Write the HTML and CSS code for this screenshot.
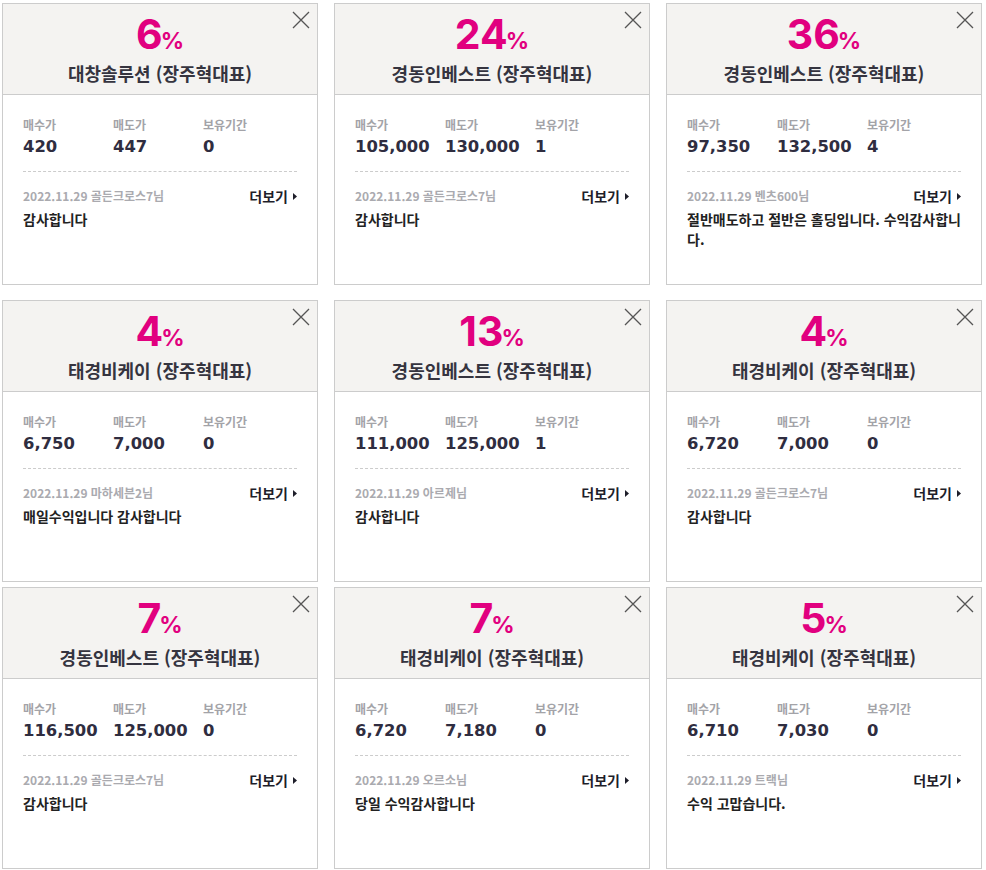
FILE: index.html
```html
<!DOCTYPE html>
<html lang="ko">
<head>
    <meta charset="UTF-8">
    <title>수익 후기</title>
    <link rel="stylesheet" href="styles.css">
</head>
<body>
    <div class="review-board">

        <!-- Row 1 -->
        <div class="review-row">
            <div class="review-card">
                <div class="card-head">
                    <button class="close-btn"><svg width="18" height="18" viewBox="0 0 18 18"><path d="M1 1L17 17M17 1L1 17"/></svg></button>
                    <div class="rate">6<span>%</span></div>
                    <div class="stock">대창솔루션 (장주혁대표)</div>
                </div>
                <div class="card-body">
                    <div class="trade">
                        <div class="trade-col"><span class="label">매수가</span><span class="value">420</span></div>
                        <div class="trade-col"><span class="label">매도가</span><span class="value">447</span></div>
                        <div class="trade-col"><span class="label">보유기간</span><span class="value">0</span></div>
                    </div>
                    <div class="meta">
                        <span class="writer">2022.11.29 골든크로스7님</span>
                        <a class="more" href="#">더보기 <svg width="4" height="7" viewBox="0 0 4 7"><path d="M0 0L4 3.5L0 7Z"/></svg></a>
                    </div>
                    <p class="comment">감사합니다</p>
                </div>
            </div>

            <div class="review-card">
                <div class="card-head">
                    <button class="close-btn"><svg width="18" height="18" viewBox="0 0 18 18"><path d="M1 1L17 17M17 1L1 17"/></svg></button>
                    <div class="rate">24<span>%</span></div>
                    <div class="stock">경동인베스트 (장주혁대표)</div>
                </div>
                <div class="card-body">
                    <div class="trade">
                        <div class="trade-col"><span class="label">매수가</span><span class="value">105,000</span></div>
                        <div class="trade-col"><span class="label">매도가</span><span class="value">130,000</span></div>
                        <div class="trade-col"><span class="label">보유기간</span><span class="value">1</span></div>
                    </div>
                    <div class="meta">
                        <span class="writer">2022.11.29 골든크로스7님</span>
                        <a class="more" href="#">더보기 <svg width="4" height="7" viewBox="0 0 4 7"><path d="M0 0L4 3.5L0 7Z"/></svg></a>
                    </div>
                    <p class="comment">감사합니다</p>
                </div>
            </div>

            <div class="review-card">
                <div class="card-head">
                    <button class="close-btn"><svg width="18" height="18" viewBox="0 0 18 18"><path d="M1 1L17 17M17 1L1 17"/></svg></button>
                    <div class="rate">36<span>%</span></div>
                    <div class="stock">경동인베스트 (장주혁대표)</div>
                </div>
                <div class="card-body">
                    <div class="trade">
                        <div class="trade-col"><span class="label">매수가</span><span class="value">97,350</span></div>
                        <div class="trade-col"><span class="label">매도가</span><span class="value">132,500</span></div>
                        <div class="trade-col"><span class="label">보유기간</span><span class="value">4</span></div>
                    </div>
                    <div class="meta">
                        <span class="writer">2022.11.29 벤츠600님</span>
                        <a class="more" href="#">더보기 <svg width="4" height="7" viewBox="0 0 4 7"><path d="M0 0L4 3.5L0 7Z"/></svg></a>
                    </div>
                    <p class="comment">절반매도하고 절반은 홀딩입니다. 수익감사합니다.</p>
                </div>
            </div>
        </div>

        <!-- Row 2 -->
        <div class="review-row">
            <div class="review-card">
                <div class="card-head">
                    <button class="close-btn"><svg width="18" height="18" viewBox="0 0 18 18"><path d="M1 1L17 17M17 1L1 17"/></svg></button>
                    <div class="rate">4<span>%</span></div>
                    <div class="stock">태경비케이 (장주혁대표)</div>
                </div>
                <div class="card-body">
                    <div class="trade">
                        <div class="trade-col"><span class="label">매수가</span><span class="value">6,750</span></div>
                        <div class="trade-col"><span class="label">매도가</span><span class="value">7,000</span></div>
                        <div class="trade-col"><span class="label">보유기간</span><span class="value">0</span></div>
                    </div>
                    <div class="meta">
                        <span class="writer">2022.11.29 마하세븐2님</span>
                        <a class="more" href="#">더보기 <svg width="4" height="7" viewBox="0 0 4 7"><path d="M0 0L4 3.5L0 7Z"/></svg></a>
                    </div>
                    <p class="comment">매일수익입니다 감사합니다</p>
                </div>
            </div>

            <div class="review-card">
                <div class="card-head">
                    <button class="close-btn"><svg width="18" height="18" viewBox="0 0 18 18"><path d="M1 1L17 17M17 1L1 17"/></svg></button>
                    <div class="rate">13<span>%</span></div>
                    <div class="stock">경동인베스트 (장주혁대표)</div>
                </div>
                <div class="card-body">
                    <div class="trade">
                        <div class="trade-col"><span class="label">매수가</span><span class="value">111,000</span></div>
                        <div class="trade-col"><span class="label">매도가</span><span class="value">125,000</span></div>
                        <div class="trade-col"><span class="label">보유기간</span><span class="value">1</span></div>
                    </div>
                    <div class="meta">
                        <span class="writer">2022.11.29 아르제님</span>
                        <a class="more" href="#">더보기 <svg width="4" height="7" viewBox="0 0 4 7"><path d="M0 0L4 3.5L0 7Z"/></svg></a>
                    </div>
                    <p class="comment">감사합니다</p>
                </div>
            </div>

            <div class="review-card">
                <div class="card-head">
                    <button class="close-btn"><svg width="18" height="18" viewBox="0 0 18 18"><path d="M1 1L17 17M17 1L1 17"/></svg></button>
                    <div class="rate">4<span>%</span></div>
                    <div class="stock">태경비케이 (장주혁대표)</div>
                </div>
                <div class="card-body">
                    <div class="trade">
                        <div class="trade-col"><span class="label">매수가</span><span class="value">6,720</span></div>
                        <div class="trade-col"><span class="label">매도가</span><span class="value">7,000</span></div>
                        <div class="trade-col"><span class="label">보유기간</span><span class="value">0</span></div>
                    </div>
                    <div class="meta">
                        <span class="writer">2022.11.29 골든크로스7님</span>
                        <a class="more" href="#">더보기 <svg width="4" height="7" viewBox="0 0 4 7"><path d="M0 0L4 3.5L0 7Z"/></svg></a>
                    </div>
                    <p class="comment">감사합니다</p>
                </div>
            </div>
        </div>

        <!-- Row 3 -->
        <div class="review-row tight">
            <div class="review-card">
                <div class="card-head">
                    <button class="close-btn"><svg width="18" height="18" viewBox="0 0 18 18"><path d="M1 1L17 17M17 1L1 17"/></svg></button>
                    <div class="rate">7<span>%</span></div>
                    <div class="stock">경동인베스트 (장주혁대표)</div>
                </div>
                <div class="card-body">
                    <div class="trade">
                        <div class="trade-col"><span class="label">매수가</span><span class="value">116,500</span></div>
                        <div class="trade-col"><span class="label">매도가</span><span class="value">125,000</span></div>
                        <div class="trade-col"><span class="label">보유기간</span><span class="value">0</span></div>
                    </div>
                    <div class="meta">
                        <span class="writer">2022.11.29 골든크로스7님</span>
                        <a class="more" href="#">더보기 <svg width="4" height="7" viewBox="0 0 4 7"><path d="M0 0L4 3.5L0 7Z"/></svg></a>
                    </div>
                    <p class="comment">감사합니다</p>
                </div>
            </div>

            <div class="review-card">
                <div class="card-head">
                    <button class="close-btn"><svg width="18" height="18" viewBox="0 0 18 18"><path d="M1 1L17 17M17 1L1 17"/></svg></button>
                    <div class="rate">7<span>%</span></div>
                    <div class="stock">태경비케이 (장주혁대표)</div>
                </div>
                <div class="card-body">
                    <div class="trade">
                        <div class="trade-col"><span class="label">매수가</span><span class="value">6,720</span></div>
                        <div class="trade-col"><span class="label">매도가</span><span class="value">7,180</span></div>
                        <div class="trade-col"><span class="label">보유기간</span><span class="value">0</span></div>
                    </div>
                    <div class="meta">
                        <span class="writer">2022.11.29 오르소님</span>
                        <a class="more" href="#">더보기 <svg width="4" height="7" viewBox="0 0 4 7"><path d="M0 0L4 3.5L0 7Z"/></svg></a>
                    </div>
                    <p class="comment">당일 수익감사합니다</p>
                </div>
            </div>

            <div class="review-card">
                <div class="card-head">
                    <button class="close-btn"><svg width="18" height="18" viewBox="0 0 18 18"><path d="M1 1L17 17M17 1L1 17"/></svg></button>
                    <div class="rate">5<span>%</span></div>
                    <div class="stock">태경비케이 (장주혁대표)</div>
                </div>
                <div class="card-body">
                    <div class="trade">
                        <div class="trade-col"><span class="label">매수가</span><span class="value">6,710</span></div>
                        <div class="trade-col"><span class="label">매도가</span><span class="value">7,030</span></div>
                        <div class="trade-col"><span class="label">보유기간</span><span class="value">0</span></div>
                    </div>
                    <div class="meta">
                        <span class="writer">2022.11.29 트랙님</span>
                        <a class="more" href="#">더보기 <svg width="4" height="7" viewBox="0 0 4 7"><path d="M0 0L4 3.5L0 7Z"/></svg></a>
                    </div>
                    <p class="comment">수익 고맙습니다.</p>
                </div>
            </div>
        </div>

    </div>
</body>
</html>
```

FILE: styles.css
```css
:root {
    --accent: #e1007f;
    --line: #cccccc;
    --head-bg: #f4f3f1;
    --text-dark: #2f2d40;
}

body {
    margin: 0;
    padding: 3px 0 0 2px;
    background: #fff;
    font-family: "Noto Sans CJK KR", "Noto Sans", sans-serif;
    color: #222;
}

.review-board {
    width: 980px;
}

.review-row {
    display: flex;
    gap: 16px;
    margin-bottom: 15px;
}

.review-row + .review-row.tight {
    margin-top: -10px;
}

.review-card {
    position: relative;
    width: 316px;
    height: 282px;
    box-sizing: border-box;
    border: 1px solid var(--line);
    background: #fff;
}

.card-head {
    height: 90px;
    background: var(--head-bg);
    border-bottom: 1px solid var(--line);
    text-align: center;
}

.close-btn {
    position: absolute;
    top: 7px;
    right: 7px;
    width: 18px;
    height: 18px;
    padding: 0;
    border: none;
    background: none;
    cursor: pointer;
}

.close-btn svg {
    display: block;
    stroke: #555;
    stroke-width: 1.3;
    fill: none;
}

.rate {
    padding-top: 9px;
    height: 42px;
    font-family: Inter, "Noto Sans", sans-serif;
    font-size: 41px;
    font-weight: 700;
    line-height: 42px;
    color: var(--accent);
}

.rate span {
    font-size: 23px;
    margin-left: -2px;
}

.stock {
    margin-top: 6px;
    font-size: 18px;
    font-weight: 700;
    line-height: 24px;
    color: #35343f;
}

.card-body {
    padding: 22px 20px 0;
}

.trade {
    display: flex;
    padding-bottom: 14px;
    border-bottom: 1px dashed var(--line);
}

.trade-col {
    display: flex;
    flex-direction: column;
    width: 90px;
}

.label {
    font-size: 12px;
    font-weight: 700;
    line-height: 16px;
    color: #a3a3a8;
}

.value {
    margin-top: 4px;
    font-family: "DejaVu Sans", sans-serif;
    font-size: 16.4px;
    font-weight: 700;
    line-height: 20px;
    color: var(--text-dark);
}

.meta {
    display: flex;
    justify-content: space-between;
    align-items: center;
    margin-top: 15px;
}

.writer {
    font-size: 12px;
    font-weight: 700;
    line-height: 18px;
    color: #aaaaaf;
}

.more {
    display: flex;
    align-items: center;
    gap: 5px;
    font-size: 14px;
    font-weight: 700;
    line-height: 18px;
    color: #1e1e2a;
    text-decoration: none;
}

.more svg {
    fill: #1e1e2a;
}

.comment {
    margin: 4px 0 0;
    font-size: 14px;
    font-weight: 700;
    line-height: 20px;
    color: #222;
}
```
